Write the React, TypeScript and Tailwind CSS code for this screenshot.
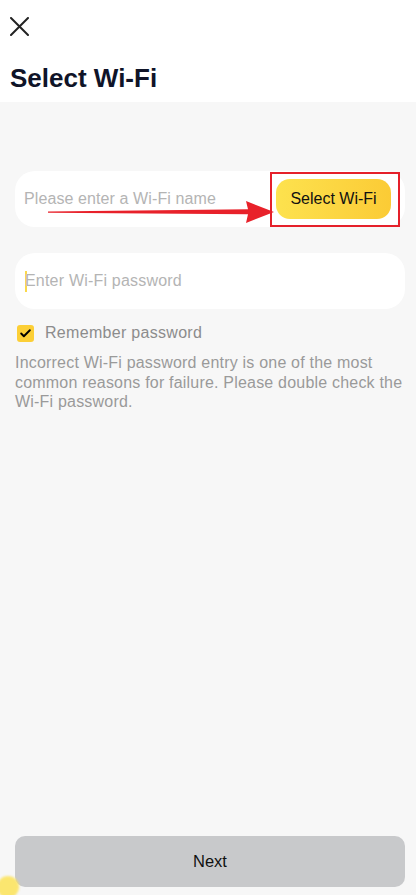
import { Check } from "lucide-react";

const font = { fontFamily: '"Liberation Sans", Arial, sans-serif' };

function RedArrow() {
  return (
    <svg className="absolute left-[48px] top-[201px]" width="226" height="22" viewBox="0 0 226 22">
      <path d="M0 10.5 L200 8.3 L198 0 L226 11 L198 22 L200 13.2 L0 11.8 Z" fill="#e8212a" />
    </svg>
  );
}

export default function App() {
  return (
    <div className="relative w-[416px] h-[895px] overflow-hidden bg-[#f7f7f7]" style={font}>
      {/* Header */}
      <div className="bg-white h-[102px] px-[10px] pt-[17px]">
        <svg width="19" height="19" viewBox="0 0 19 19" className="text-[#222]">
          <path d="M1 1 L18 18 M18 1 L1 18" stroke="currentColor" strokeWidth="2" strokeLinecap="round" />
        </svg>
        <h1 className="mt-[27px] text-[26px] leading-[30px] font-bold text-[#0f1428]">Select Wi-Fi</h1>
      </div>

      <div className="pl-[15px] pr-[11px] pt-[69px]">
        {/* Wi-Fi name */}
        <div className="h-[56px] rounded-[20px] bg-white flex items-center justify-between pl-[9px] pr-[14px]">
          <span className="text-[16px] tracking-[0.1px] text-[#b4b4b4]">Please enter a Wi-Fi name</span>
          <div className="h-[40px] w-[115px] rounded-[14px] bg-gradient-to-r from-[#fde24e] to-[#fbcb35] flex items-center justify-center text-[16px] text-[#111]">
            Select Wi-Fi
          </div>
        </div>

        {/* password */}
        <div className="mt-[26px] h-[56px] rounded-[20px] bg-white flex items-center pl-[10px]">
          <span className="w-[2px] h-[21px] bg-[#fad84a] mr-[-2px]" />
          <span className="text-[16px] tracking-[0.2px] text-[#b4b4b4]">Enter Wi-Fi password</span>
        </div>

        <div className="mt-[12px] flex items-center gap-[11px] pl-[2px]">
          <div className="w-[17px] h-[17px] rounded-[3px] bg-[#fccf36] flex items-center justify-center">
            <Check className="w-[13px] h-[13px] text-black" strokeWidth={3.5} />
          </div>
          <span className="text-[16px] tracking-[0.3px] text-[#8c8c8c]">Remember password</span>
        </div>

        <p className="mt-[8px] mr-[-8px] text-[16px] tracking-[0.2px] leading-[19.5px] text-[#9a9a9a]">
          Incorrect Wi-Fi password entry is one of the most common reasons for failure. Please double check the Wi-Fi password.
        </p>
      </div>

      {/* Next */}
      <div className="absolute left-[15px] right-[11px] top-[836px] h-[51px] rounded-[10px] bg-[#c8c9cb] flex items-center justify-center text-[16.5px] text-[#111]">
        Next
      </div>

      {/* annotation overlays */}
      <div className="absolute left-[270px] top-[172px] w-[130px] h-[55px] border-2 border-[#e5202a]" />
      <RedArrow />
      <div className="absolute left-[-3px] top-[876px] w-[22px] h-[22px] rounded-full bg-[#fde24e] opacity-80 blur-[1px]" />
    </div>
  );
}
